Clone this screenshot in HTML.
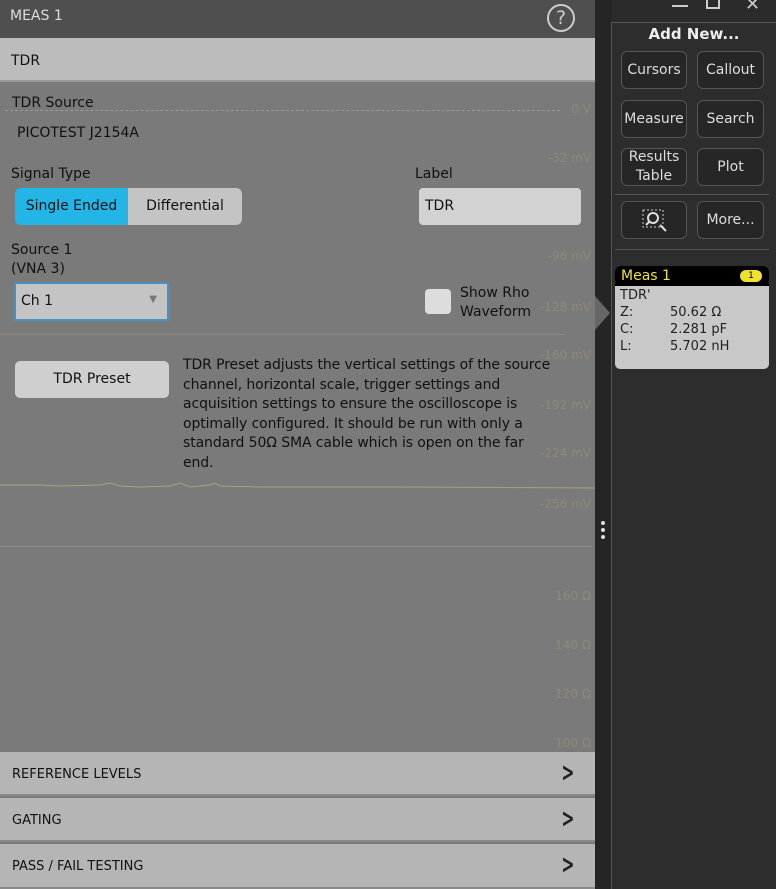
<!DOCTYPE html>
<html><head><style>
*{margin:0;padding:0;box-sizing:border-box}
body{width:776px;height:889px;overflow:hidden;background:#2b2b2b;font-family:"DejaVu Sans","Liberation Sans",sans-serif;position:relative}
.a{position:absolute}
.lbl{color:#111;font-size:14px}
.btn{position:absolute;border:1px solid #555;border-radius:6px;background:#262626;color:#ddd;font-size:14px;display:flex;align-items:center;justify-content:center;text-align:center;line-height:19px}
.sec{position:absolute;left:0;width:595px;height:44px;background:#b5b5b5;border-bottom:2px solid #8a8a8a;color:#111;font-size:13px;padding:15px 12px}
.sec span{position:absolute;right:16px;top:6px;font-size:26px;font-weight:bold;transform:scaleX(.6);color:#222}
.ax{position:absolute;color:#9a9570;font-size:12px;right:4px;opacity:.6}
</style></head><body>
<div class="a" style="left:0;top:0;width:595px;height:889px;background:#7a7a7a"></div>
<div class="a" style="left:0;top:0;width:595px;height:38px;background:#4f4f4f;color:#ddd;font-size:14px;padding:8px 10px">MEAS 1
<div class="a" style="left:547px;top:4px;width:28px;height:28px;border:2px solid #ccc;border-radius:50%;color:#ccc;font-size:19px;text-align:center;line-height:24px">?</div></div>
<div class="a" style="left:0;top:38px;width:595px;height:44px;background:#bcbcbc;border-bottom:2px solid #999;color:#111;font-size:14px;padding:15px 11px">TDR</div>
<div class="a" style="left:0;top:82px;width:595px;height:670px">
<div class="ax" style="top:20px">0 V</div><div class="ax" style="top:69px">-32 mV</div><div class="ax" style="top:167px">-96 mV</div><div class="ax" style="top:218px">-128 mV</div><div class="ax" style="top:266px">-160 mV</div><div class="ax" style="top:316px">-192 mV</div><div class="ax" style="top:364px">-224 mV</div><div class="ax" style="top:415px">-256 mV</div><div class="ax" style="top:507px">160 Ω</div><div class="ax" style="top:556px">140 Ω</div><div class="ax" style="top:605px">120 Ω</div><div class="ax" style="top:654px">100 Ω</div>
</div>
<div class="a" style="left:5px;top:110px;width:555px;border-top:1px dashed #999"></div>
<div class="a" style="left:0;top:334px;width:565px;height:1px;background:#8f8a80"></div>
<div class="a" style="left:0;top:546px;width:592px;height:1px;background:#8c8c8c"></div>
<svg class="a" style="left:0;top:480px" width="595" height="15"><polyline points="0,5 40,5 60,6 100,5 110,3 120,6 140,7 170,6 180,3 190,7 210,5 215,3 220,6 260,7 400,7 595,8" fill="none" stroke="#a8a27a" stroke-width="1"/></svg>
<div class="a lbl" style="left:12px;top:95px">TDR Source</div>
<div class="a lbl" style="left:17px;top:125px">PICOTEST J2154A</div>
<div class="a lbl" style="left:11px;top:166px">Signal Type</div>
<div class="a lbl" style="left:415px;top:166px">Label</div>
<div class="a" style="left:15px;top:188px;width:113px;height:37px;background:#22b5e6;border-radius:6px 0 0 6px;color:#111;font-size:14px;text-align:center;line-height:37px">Single Ended</div>
<div class="a" style="left:128px;top:188px;width:114px;height:37px;background:#c4c4c4;border-radius:0 6px 6px 0;color:#111;font-size:14px;text-align:center;line-height:37px">Differential</div>
<div class="a" style="left:419px;top:188px;width:162px;height:37px;background:#d2d2d2;border-radius:4px;color:#111;font-size:14px;padding:10px 6px">TDR</div>
<div class="a lbl" style="left:11px;top:241px;line-height:19px">Source 1<br>(VNA 3)</div>
<div class="a" style="left:14px;top:282px;width:155px;height:39px;background:#c4c4c4;border:2px solid #4a90c0;color:#111;font-size:14px;padding:9px 5px">Ch 1<span style="position:absolute;right:10px;top:10px;font-size:10px;color:#777">▼</span></div>
<div class="a" style="left:425px;top:289px;width:26px;height:25px;background:#ddd;border-radius:4px"></div>
<div class="a lbl" style="left:460px;top:284px;line-height:19px">Show Rho<br>Waveform</div>
<div class="a" style="left:15px;top:361px;width:154px;height:37px;background:#cfcfcf;border-radius:5px;color:#111;font-size:14px;text-align:center;line-height:37px">TDR Preset</div>
<div class="a" style="left:183px;top:356px;width:380px;color:#111;font-size:14px;line-height:19.5px;letter-spacing:-0.1px">TDR Preset adjusts the vertical settings of the source channel, horizontal scale, trigger settings and acquisition settings to ensure the oscilloscope is optimally configured. It should be run with only a standard 50Ω SMA cable which is open on the far<br>end.</div>
<div class="sec" style="top:752px">REFERENCE LEVELS<span>&gt;</span></div>
<div class="sec" style="top:798px">GATING<span>&gt;</span></div>
<div class="sec" style="top:844px;height:45px">PASS / FAIL TESTING<span>&gt;</span></div>
<div class="a" style="left:595px;top:0;width:17px;height:889px;background:#252525"></div>
<div class="a" style="left:595px;top:296px;border-left:15px solid #666;border-top:17px solid transparent;border-bottom:17px solid transparent"></div>
<div class="a" style="left:601px;top:521px;width:4px;height:4px;border-radius:2px;background:#ddd;box-shadow:0 7px 0 #ddd,0 14px 0 #ddd"></div>
<div class="a" style="left:611px;top:22px;width:165px;height:867px;border-left:1px solid #555;border-top:1px solid #555;background:#2d2d2d"></div>
<div class="a" style="left:672px;top:5px;width:16px;height:2px;background:#ccc"></div>
<div class="a" style="left:706px;top:0;width:14px;height:9px;border:2px solid #ccc;border-top:none"></div>
<div class="a" style="left:745px;top:-6px;color:#ccc;font-size:18px">✕</div>
<div class="a" style="left:612px;top:25px;width:164px;text-align:center;color:#eee;font-size:15px;font-weight:bold">Add New...</div>
<div class="btn" style="left:621px;top:51px;width:66px;height:38px">Cursors</div>
<div class="btn" style="left:697px;top:51px;width:67px;height:38px">Callout</div>
<div class="btn" style="left:621px;top:100px;width:66px;height:38px">Measure</div>
<div class="btn" style="left:697px;top:100px;width:67px;height:38px">Search</div>
<div class="btn" style="left:621px;top:148px;width:66px;height:38px">Results<br>Table</div>
<div class="btn" style="left:697px;top:148px;width:67px;height:38px">Plot</div>
<div class="a" style="left:615px;top:194px;width:154px;height:1px;background:#555"></div>
<div class="btn" style="left:621px;top:201px;width:66px;height:38px"><svg width="28" height="26"><rect x="3" y="3" width="20" height="17" fill="none" stroke="#ccc" stroke-dasharray="2 2"/><circle cx="13" cy="11" r="5" fill="none" stroke="#ddd" stroke-width="2"/><path d="M10 14l-4 4M20 18l6 6" stroke="#ddd" stroke-width="2"/></svg></div>
<div class="btn" style="left:697px;top:201px;width:67px;height:38px">More...</div>
<div class="a" style="left:615px;top:249px;width:154px;height:1px;background:#555"></div>
<div class="a" style="left:615px;top:266px;width:154px;height:103px;background:#c8c8c8;border-radius:5px;overflow:hidden;color:#222;font-size:13px">
<div style="background:#000;color:#f0e030;height:20px;padding:2px 6px;font-size:14px">Meas 1<span style="position:absolute;right:7px;top:4px;width:22px;height:12px;background:#f0e030;border-radius:6px;color:#000;font-size:9px;text-align:center;line-height:12px">1</span></div>
<div style="padding:1px 5px;line-height:17px">TDR'<br>Z:<span style="position:absolute;left:55px">50.62 Ω</span><br>C:<span style="position:absolute;left:55px">2.281 pF</span><br>L:<span style="position:absolute;left:55px">5.702 nH</span></div></div>
</body></html>
